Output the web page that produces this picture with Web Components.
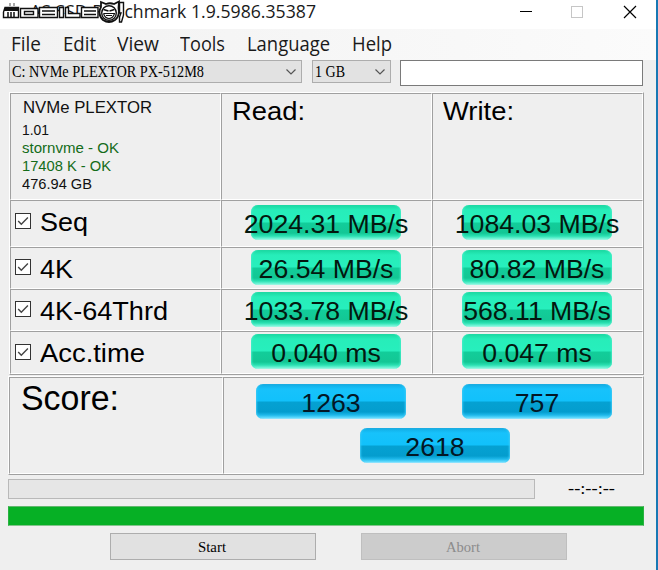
<!DOCTYPE html>
<html lang="en"><head><meta charset="utf-8"><title>AS SSD Benchmark</title>
<style>html,body{margin:0;overflow:hidden;background:#f0f0f0}</style></head><body>
<bench-window></bench-window>
<script>
const define=(name,html,after)=>customElements.define(name,class extends HTMLElement{
  connectedCallback(){
    if(this.shadowRoot)return;
    this.attachShadow({mode:'open'}).innerHTML=html;
    if(after)after(this,this.shadowRoot);
  }
});

// Single line of text scaled horizontally to the width given in "w".
define('fit-text',`<style>:host{display:block;white-space:pre;width:max-content}span{display:inline-block;transform-origin:0 50%}</style><span><slot></slot></span>`,(el,root)=>{
  const w=+el.getAttribute('w'),s=root.querySelector('span'),n=s.getBoundingClientRect().width;
  if(w&&n){s.style.transform=`scaleX(${w/n})`;el.style.width=w+'px';}
});

define('value-pill',`<style>
:host{display:block;position:relative;box-sizing:border-box;width:150px;height:35px;border-radius:7px;
 font:26.67px/35px "Liberation Sans",sans-serif;color:#03180f;
 background:linear-gradient(#1bd69f 0,#1fe0aa 2px,#27edb9 5px,#27efbd 17px,#12cd9a 18px,#13c795 28px,#29e0b1 31px,#7cf7dc 34px,#c5f7ea 35px);
 box-shadow:inset 2px 0 2px -1px #45edc6,inset -2px 0 2px -1px #45edc6}
:host([tone=blue]){color:#031725;background:linear-gradient(#1aa7dc 0,#14b4ec 2px,#17c2fb 5px,#11c1fb 17px,#05a1d2 18px,#049dce 28px,#1db8ea 31px,#66ddff 34px,#c0eefb 35px);
 box-shadow:inset 2px 0 2px -1px #3bc9f6,inset -2px 0 2px -1px #3bc9f6}
div{display:flex;justify-content:center;padding-top:2px;white-space:pre}
</style><div><slot></slot></div>`);

define('check-row',`<style>:host{display:flex;gap:9px;padding-left:4px;font:26.67px/42px "Liberation Sans",sans-serif;color:#000}
svg{flex:none;margin-top:var(--box,11px)}</style>
<svg width="16" height="16" viewBox="0 0 16 16"><rect x=".5" y=".5" width="15" height="15" fill="#fff" stroke="#333"/><path d="M3.2 8l3.1 3.2 6.6-6.7" fill="none" stroke="#444" stroke-width="1.4"/></svg><slot></slot>`);

define('grid-cell',`<style>:host{display:block;box-sizing:border-box;min-width:0;min-height:0;border:1px solid;border-color:#a0a0a0 #fff #fff #a0a0a0}</style><slot></slot>`);

define('grid-frame',`<style>:host{display:grid;box-sizing:border-box;border:1px solid;border-color:#fff #a0a0a0 #a0a0a0 #fff}</style><slot></slot>`);

define('combo-box',`<style>:host{display:flex;box-sizing:border-box;height:23px;border:1px solid #adadad;background:#e2e2e2;justify-content:space-between;padding:0 4px 0 2px;font:16px/22px "Liberation Serif",serif;color:#000}
svg{margin-top:7px;flex:none}</style><slot></slot><svg width="12" height="8" viewBox="0 0 12 8"><path d="M1.5 1.5L6 6l4.500-4.500" fill="none" stroke="#555" stroke-width="1.2"/></svg>`);

define('push-button',`<style>:host{display:flex;justify-content:center;box-sizing:border-box;width:206px;height:27px;padding-right:3px;border:1px solid #adadad;background:#e1e1e1;font:15.500px/26px "Liberation Serif",serif;color:#000}
:host([disabled]){background:#ccc;border-color:#bfbfbf;color:#8b8b8b}</style><slot></slot>`);

define('title-bar',`<style>
:host{display:flex;position:relative;height:29px;background:#fff;box-sizing:border-box;padding-left:30px;font:18px/23px "Open Sans",sans-serif;color:#1a1a1a}
.sys{position:absolute;right:0;top:0}.mark{position:absolute;left:0;top:0}
</style><fit-text w="286">AS SSD Benchmark 1.9.5986.35387</fit-text>
<svg class="sys" width="146" height="29" viewBox="510 0 146 29"><path d="M520 11.500h12" stroke="#000"/><rect x="571.500" y="6.500" width="11" height="11" fill="none" stroke="#c6c6c6"/><path d="M624 6l12 12M636 6l-12 12" stroke="#000" stroke-width="1.200"/></svg>
<svg class="mark" width="128" height="26" viewBox="0 0 128 26">
<path d="M18 14h84v4H18zM40 14h62v10H40z" fill="#fff"/><path d="M98 19L111 23 125 20V12H124V21H118L100 23z" fill="#fff"/>
<g fill="#fff" stroke="#111" stroke-width="1.400">
<path d="M5 7.500H18.500V17.500H3.500V12z"/><path d="M4 9.500h14" stroke-width="3"/><path d="M8 17v-5M11 17v-5M14 17v-5" stroke-width="1.500"/>
<path d="M20.500 8.500H38V17.500H20.500z"/><path d="M24.500 11.500h9v3h-9z"/>
<path d="M39.500 7.500H57.500V17.500H39.500zM42 11h13M42 14.500h13"/>
<path d="M59.500 7.500h4v10h-4z"/><path d="M65.500 7.500h3v6H80v4H65.500z"/>
<path d="M81.500 7.500H98V17.500H81.500zM84 11h12M84 14.500h12"/>
<path d="M101 7L101 2 106 4Q110 2.500 114 4L119 1.500 118.500 8Q120 16 115 20Q109 24 103 20Q97 14 101 7z" stroke-width="1.800"/>
<circle cx="109" cy="13" r="7.300"/><path d="M103.500 9.500l5 1.500M114.500 9.500l-5 1.500" stroke-width="1.500"/><path d="M103.500 13.500h11Q113 18.500 109 18.500T103.500 13.500M106 15.500h6" stroke-width="1.100"/>
<path d="M119.500 2.500H123.500V15L121.500 22H119.500V17L121 13H119.500z"/>
</g><path d="M9 3h2v3H9zM13 3h2v3h-2z" fill="#aaa"/>
</svg>`);

define('menu-bar',`<style>:host{display:grid;grid-template-columns:52px 54px 63px 67px 105px auto;height:31px;padding-left:11px;background:linear-gradient(90deg,#f2f2f2,#f8f8f8 70%,#fbfbfb);font:19.500px/30px "Open Sans",sans-serif;color:#1a1a1a}</style>
<fit-text w="30">File</fit-text><fit-text w="33">Edit</fit-text><fit-text w="42">View</fit-text><fit-text w="45">Tools</fit-text><fit-text w="83">Language</fit-text><fit-text w="40">Help</fit-text>`);

const row=(name,w,a,b,pad,box)=>`<grid-cell><check-row style="--box:${box}px"><fit-text w="${w}">${name}</fit-text></check-row></grid-cell>`+
 [a,b].map(v=>`<grid-cell style="padding:${pad}px 0 0 29px"><value-pill>${v}</value-pill></grid-cell>`).join('');

define('bench-window',`<style>
:host{display:flex;flex-direction:column;box-sizing:border-box;width:658px;height:570px;background:#efefef;border-right:2px solid #1878b4;font-family:"Liberation Sans",sans-serif;color:#000}
.tools{display:grid;grid-template-columns:293px 79px 243px;column-gap:9.500px;height:32px;padding-left:9px;align-items:start}
.tools i{height:24px;border:1px solid #7a7a7a;background:#fff}
.results{width:635px;height:283px;margin-left:9px;grid-template-columns:211px 211px 211px;grid-template-rows:107px 47px 42px 42px 43px}
.info{padding:0 0 0 11px;font-size:15px;line-height:18px;color:#111}
.info .name{font-size:16.500px;line-height:26px;margin:0 0 1px 1px}.ok{color:#146c1a}
.head{padding-left:10px;font-size:26.670px;line-height:34px}
.score{width:636px;height:99px;margin:1px 0 0 8px;grid-template-columns:214px 420px}
.total{padding-left:11px;font-size:34.500px;line-height:40px}
.pills{display:grid;grid-template-columns:206px 150px;row-gap:9px;align-content:start;padding:6px 0 0 32px}
.pills>:last-child{grid-column:1/3;justify-self:start;margin-left:104px}
.status{display:flex;gap:33px;margin:4px 0 0 8px;height:20px;font:16px/20px "Liberation Serif",serif}
.status b{box-sizing:border-box;width:527px;border:1px solid #b9b9b9;background:#e6e6e6}
.green{box-sizing:border-box;width:636px;height:20px;margin:7px 0 7px 8px;background:#06b025;border:1px solid;border-color:#62b76e #29b241 #82c48b #29b241}
.actions{display:flex;gap:45px;padding-left:110px}
</style>
<title-bar></title-bar><menu-bar></menu-bar>
<div class="tools"><combo-box><fit-text w="192">C: NVMe PLEXTOR PX-512M8</fit-text></combo-box><combo-box><fit-text w="30">1 GB</fit-text></combo-box><i></i></div>
<grid-frame class="results">
<grid-cell class="info"><fit-text class="name" w="129">NVMe PLEXTOR</fit-text><fit-text w="27">1.01</fit-text><fit-text class="ok" w="97">stornvme - OK</fit-text><fit-text class="ok" w="89">17408 K - OK</fit-text><fit-text w="70">476.94 GB</fit-text></grid-cell>
<grid-cell class="head"><fit-text w="73">Read:</fit-text></grid-cell><grid-cell class="head"><fit-text w="71">Write:</fit-text></grid-cell>
${row('Seq',48,'2024.31 MB/s','1084.03 MB/s',4,12)}${row('4K',33,'26.54 MB/s','80.82 MB/s',2,11)}${row('4K-64Thrd',128,'1033.78 MB/s','568.11 MB/s',2,11)}${row('Acc.time',105,'0.040 ms','0.047 ms',2,12)}
</grid-frame>
<grid-frame class="score"><grid-cell class="total"><fit-text w="98">Score:</fit-text></grid-cell>
<grid-cell class="pills"><value-pill tone="blue">1263</value-pill><value-pill tone="blue">757</value-pill><value-pill tone="blue">2618</value-pill></grid-cell></grid-frame>
<div class="status"><b></b><fit-text w="47">--:--:--</fit-text></div><div class="green"></div>
<div class="actions"><push-button><fit-text w="28">Start</fit-text></push-button><push-button disabled><fit-text w="34">Abort</fit-text></push-button></div>`);
</script></body></html>
